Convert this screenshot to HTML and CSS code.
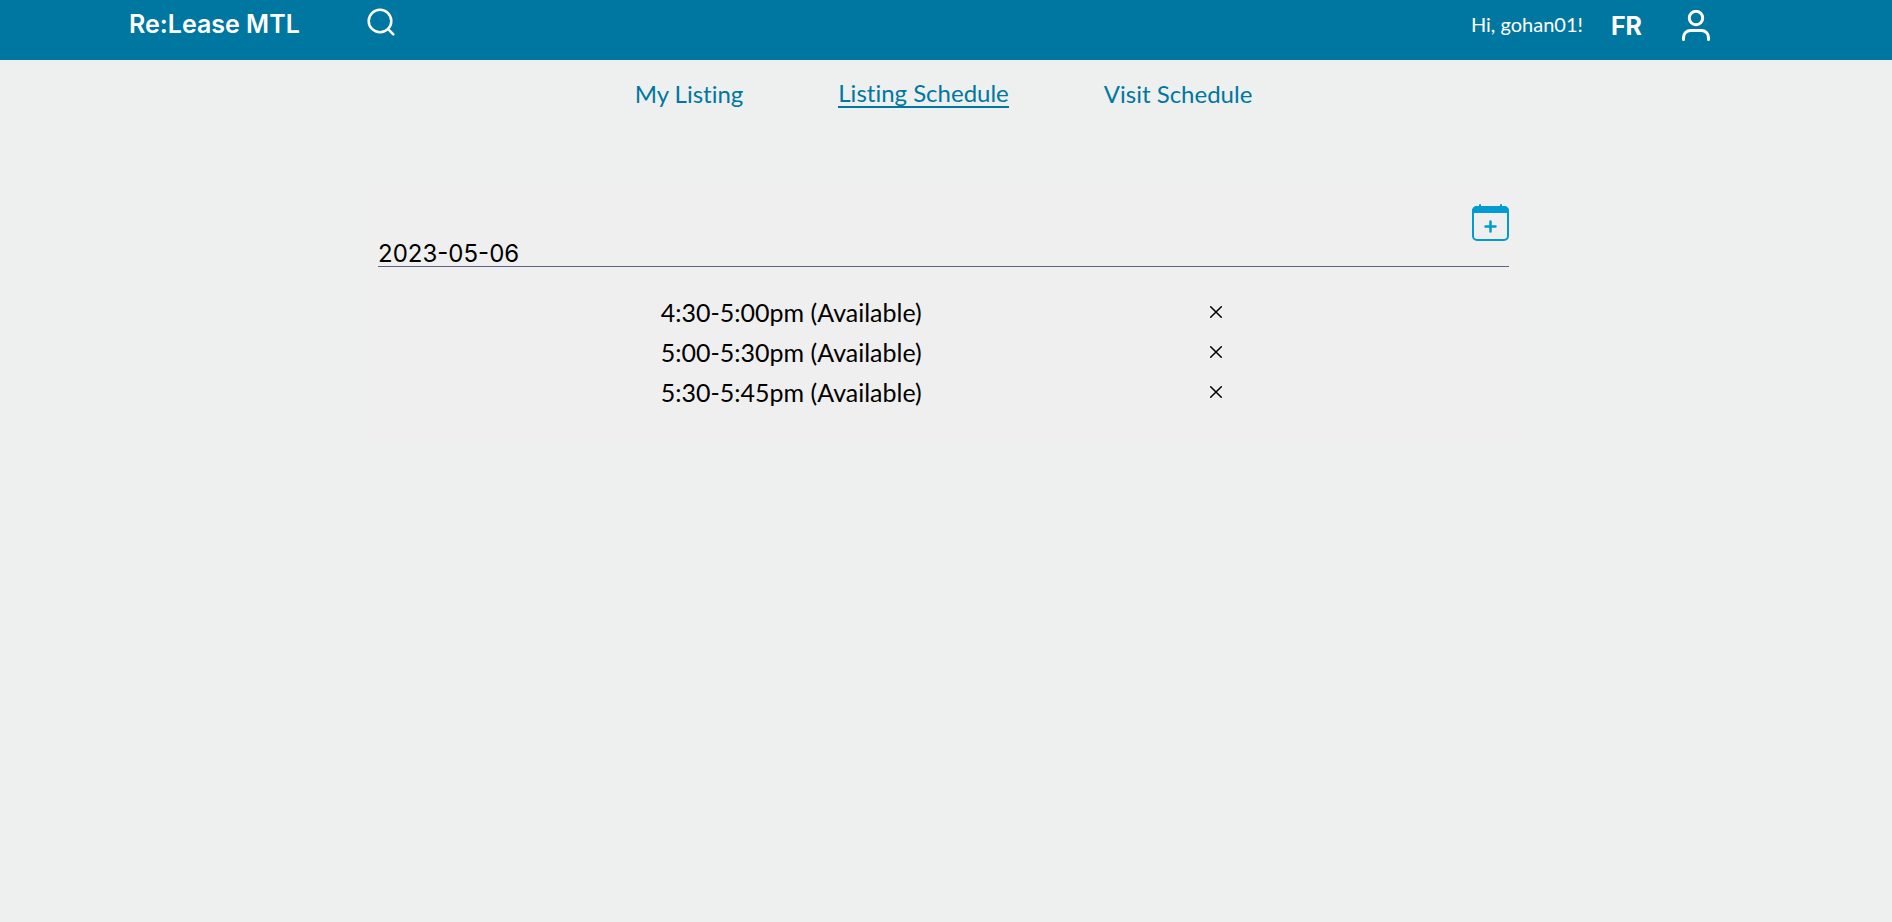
FILE: index.html
```html
<!DOCTYPE html>
<html lang="en">
<head>
<meta charset="utf-8">
<meta name="viewport" content="width=device-width, initial-scale=1">
<title>Re:Lease MTL</title>
<link rel="stylesheet" href="styles.css">
</head>
<body>
<header class="topbar">
  <a class="brand" href="#">Re:Lease MTL</a>
  <button class="icon-button search" type="button" aria-label="Search">
    <svg width="28" height="28" viewBox="0 0 28 28" fill="none" stroke="currentColor" stroke-width="2.500" stroke-linecap="round"><circle cx="13" cy="13" r="11.3"/><path d="M21.2 21.2 26.300 26.300"/></svg>
  </button>
  <div class="account">
    <span class="greeting">Hi, gohan01!</span>
    <button class="language" type="button">FR</button>
    <button class="icon-button" type="button" aria-label="Account">
      <svg width="30" height="32" viewBox="0 0 30 32" fill="none" stroke="currentColor" stroke-width="3" stroke-linecap="round"><circle cx="15" cy="8" r="6.7"/><path d="M2.5 29.500V27.500a7 7 0 0 1 7-7h11a7 7 0 0 1 7 7V29.500"/></svg>
    </button>
  </div>
</header>
<div class="page">
<nav class="tabs">
  <a class="tab" href="#">My Listing</a>
  <a class="tab tab-active" href="#" aria-current="page">Listing Schedule</a>
  <a class="tab" href="#">Visit Schedule</a>
</nav>
<main class="schedule">
  <div class="toolbar">
    <button class="icon-button add" type="button" aria-label="Add a date">
      <svg width="37" height="37" viewBox="0 0 37 37" fill="none" stroke="currentColor" stroke-width="2" stroke-linecap="round"><rect x="1" y="3" width="35" height="33" rx="4"/><path d="M0 9V7a5 5 0 0 1 5-5h27a5 5 0 0 1 5 5v2Z" fill="currentColor" stroke="none"/><path d="M8 1v2M29 1v2"/><path d="M18.500 17.500v10M13.500 22.500h10" stroke-width="2.500"/></svg>
    </button>
  </div>
  <h2 class="date">2023-05-06</h2>
  <ul class="slots">
    <li class="slot"><span>4:30-5:00pm (Available)</span><button class="icon-button" type="button" aria-label="Remove 4:30-5:00pm"><svg width="12" height="12" viewBox="0 0 12 12" stroke="currentColor" stroke-width="1.500" stroke-linecap="round"><path d="M.7.7l10.600 10.600M11.300.7.7 11.300"/></svg></button></li>
    <li class="slot"><span>5:00-5:30pm (Available)</span><button class="icon-button" type="button" aria-label="Remove 5:00-5:30pm"><svg width="12" height="12" viewBox="0 0 12 12" stroke="currentColor" stroke-width="1.500" stroke-linecap="round"><path d="M.7.7l10.600 10.600M11.300.7.7 11.300"/></svg></button></li>
    <li class="slot"><span>5:30-5:45pm (Available)</span><button class="icon-button" type="button" aria-label="Remove 5:30-5:45pm"><svg width="12" height="12" viewBox="0 0 12 12" stroke="currentColor" stroke-width="1.500" stroke-linecap="round"><path d="M.7.7l10.600 10.600M11.300.7.7 11.300"/></svg></button></li>
  </ul>
</main>
</div>
</body>
</html>
```

FILE: styles.css
```css
* { box-sizing: border-box; }

body {
  margin: 0;
  background: #eef0ef;
  color: #000;
  font-family: Lato, "Liberation Sans", sans-serif;
  font-size: 25px;
  font-variant-ligatures: none;
  line-height: 32px;
}

.topbar {
  display: flex;
  align-items: flex-start;
  padding: 8px 181px 18px 129px;
  background: #0077a0;
  color: #fff;
}

.brand {
  min-width: 238px;
  color: inherit;
  font-family: Inter, "Open Sans", sans-serif;
  font-weight: 600;
  text-decoration: none;
}

.icon-button {
  display: flex;
  padding: 0;
  border: 0;
  background: none;
  color: inherit;
  cursor: pointer;
}

.account {
  display: flex;
  align-items: center;
  margin-left: auto;
  padding-top: 2px;
}

.greeting {
  padding-bottom: 4px;
  font-size: 20px;
  line-height: 28px;
}

.language {
  margin: 0 39px 0 28px;
  padding: 0;
  border: 0;
  background: none;
  color: inherit;
  font: 700 25px/32px Inter, "Open Sans", sans-serif;
  cursor: pointer;
}

.page { padding-right: 5px; }

.tabs {
  display: flex;
  justify-content: center;
  align-items: center;
  gap: 95px;
  padding: 20px 0;
}

.tab {
  color: #0077a0;
  font-size: 24px;
  line-height: 28px;
  text-decoration: none;
}

.tab-active {
  border-bottom: 2px solid #0077a0;
  line-height: 26px;
}

.schedule {
  width: 61.2%;
  margin: 56px auto 0;
  padding: 20px 12px 31px;
  background: #efefef;
}

.toolbar {
  display: flex;
  justify-content: flex-end;
}

.add { color: #009bd1; }

.date {
  margin: 0;
  border-bottom: 1px solid #5b6480;
  font: 400 24px/25px Inter, "Open Sans", sans-serif;
}

.slots {
  margin: 0;
  padding: 25px 25.4% 0 25%;
  list-style: none;
}

.slot {
  display: flex;
  justify-content: space-between;
  align-items: center;
  line-height: 40px;
}
```
